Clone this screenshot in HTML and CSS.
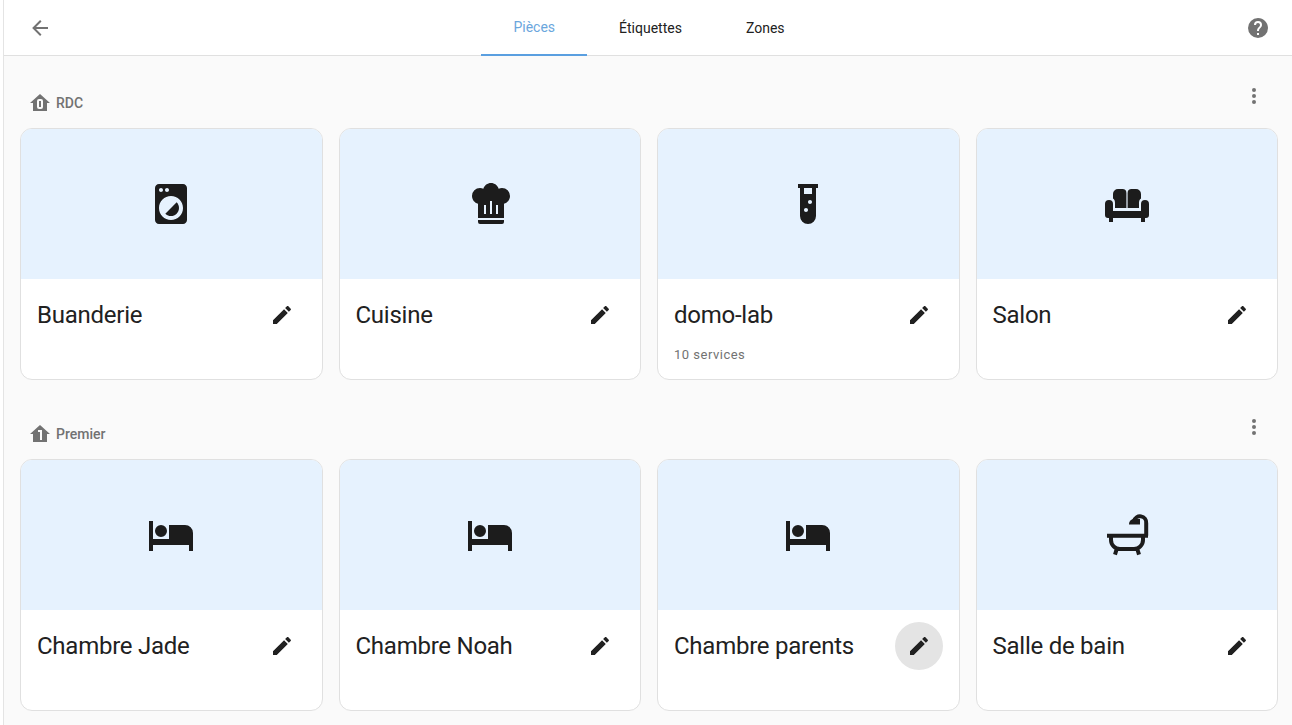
FILE: index.html
```html
<!DOCTYPE html>
<html lang="fr">
<head>
    <meta charset="UTF-8">
    <meta name="viewport" content="width=device-width, initial-scale=1.0">
    <title>Pièces</title>
    <link rel="stylesheet" href="styles.css">
</head>
<body>
    <svg class="sprites" xmlns="http://www.w3.org/2000/svg">
        <symbol id="i-pencil" viewBox="0 0 24 24"><path d="M20.71,7.04C21.1,6.65 21.1,6 20.71,5.63L18.37,3.29C18,2.9 17.35,2.9 16.96,3.29L15.12,5.12L18.87,8.87M3,17.25V21H6.75L17.81,9.93L14.06,6.18L3,17.25Z"/></symbol>
        <symbol id="i-dots" viewBox="0 0 24 24"><path d="M12,16A2,2 0 0,1 14,18A2,2 0 0,1 12,20A2,2 0 0,1 10,18A2,2 0 0,1 12,16M12,10A2,2 0 0,1 14,12A2,2 0 0,1 12,14A2,2 0 0,1 10,12A2,2 0 0,1 12,10M12,4A2,2 0 0,1 14,6A2,2 0 0,1 12,8A2,2 0 0,1 10,6A2,2 0 0,1 12,4Z"/></symbol>
        <symbol id="i-bed" viewBox="0 0 24 24"><path d="M19,7H11V14H3V5H1V20H3V17H21V20H23V11A4,4 0 0,0 19,7M7,13A3,3 0 0,0 10,10A3,3 0 0,0 7,7A3,3 0 0,0 4,10A3,3 0 0,0 7,13Z"/></symbol>
        <symbol id="i-washer" viewBox="0 0 24 24"><path fill-rule="evenodd" d="M6,2H18C19.11,2 20,2.89 20,4V20C20,21.11 19.11,22 18,22H6C4.89,22 4,21.11 4,20V4C4,2.89 4.89,2 6,2M7,4C6.45,4 6,4.45 6,5C6,5.55 6.45,6 7,6C7.55,6 8,5.55 8,5C8,4.45 7.55,4 7,4M10,4C9.45,4 9,4.45 9,5C9,5.55 9.45,6 10,6C10.55,6 11,5.55 11,5C11,4.45 10.55,4 10,4M12,8C8.69,8 6,10.69 6,14C6,17.31 8.69,20 12,20C15.31,20 18,17.31 18,14C18,10.69 15.31,8 12,8Z"/><path d="M14.83,11.17C16.39,12.73 16.39,15.27 14.83,16.83C13.27,18.39 10.73,18.39 9.17,16.83L14.83,11.17Z"/></symbol>
        <symbol id="i-chef" viewBox="0 0 24 24"><path fill-rule="evenodd" d="M12.5,1.5C10.73,1.5 9.17,2.67 8.67,4.37C8.14,4.13 7.58,4 7,4A4,4 0 0,0 3,8C3,9.82 4.24,11.42 6,11.87V19H19V11.87C20.76,11.42 22,9.82 22,8A4,4 0 0,0 18,4C17.42,4 16.86,4.13 16.33,4.37C15.83,2.67 14.27,1.5 12.5,1.5M12,10.5H13V17H12V10.5M9,12.5H10V17H9V12.5M15,12.5H16V17H15V12.5M6,20V21A1,1 0 0,0 7,22H18A1,1 0 0,0 19,21V20H6Z"/></symbol>
        <symbol id="i-tube" viewBox="0 0 24 24"><path fill-rule="evenodd" d="M7,2V4H8V18A4,4 0 0,0 12,22A4,4 0 0,0 16,18V4H17V2H7M11,16C10.4,16 10,15.6 10,15C10,14.4 10.4,14 11,14C11.6,14 12,14.4 12,15C12,15.6 11.6,16 11,16M13,12C12.4,12 12,11.6 12,11C12,10.4 12.4,10 13,10C13.6,10 14,10.4 14,11C14,11.6 13.6,12 13,12M14,7H10V4H14V7Z"/></symbol>
        <symbol id="i-sofa" viewBox="0 0 24 24"><path d="M7.5,4.5H9.7A2,2 0 0,1 11.7,6.5V14H6V11.5C6,10.4 5.7,9.7 5,9.3V7A2.5,2.5 0 0,1 7.5,4.5M14.3,4.5H16.5A2.5,2.5 0 0,1 19,7V9.3C18.3,9.7 18,10.4 18,11.5V14H12.3V6.5A2,2 0 0,1 14.3,4.5M1,12A2,2 0 0,1 5,12V15.5H19V12A2,2 0 0,1 23,12V17.5A1.5,1.5 0 0,1 21.5,19H21V21H19V19H5V21H3V19H2.5A1.5,1.5 0 0,1 1,17.5V12Z"/></symbol>
        <symbol id="i-bath" viewBox="0 0 24 24"><path d="M2,12.4H22.5M4,12.4V14.5A4.5,4.5 0 0,0 8.5,19H15.5A4.5,4.5 0 0,0 20,14.5V12.4M7,18.5L6,21.8M17,18.5L18,21.8M21.6,12.4V6A3.1,3.1 0 0,0 15.5,5" fill="none" stroke="currentColor" stroke-width="2"/><path d="M13,6.8V6.5A2.5,2.5 0 0,1 15.5,4H18.5V6.8Z"/></symbol>
        <symbol id="i-floor0" viewBox="0 0 24 24"><path fill-rule="evenodd" d="M12,3L2,12H5V20H19V12H22L12,3M11,8H13A2,2 0 0,1 15,10V16A2,2 0 0,1 13,18H11A2,2 0 0,1 9,16V10A2,2 0 0,1 11,8M11,10V16H13V10H11Z"/></symbol>
        <symbol id="i-floor1" viewBox="0 0 24 24"><path fill-rule="evenodd" d="M12,3L2,12H5V20H19V12H22L12,3M10,8H14V18H12V10H10V8Z"/></symbol>
    </svg>

    <div class="main">
        <header class="topbar">
            <button class="icon-btn">
                <svg class="icon" viewBox="0 0 24 24"><path d="M20,11V13H8L13.5,18.5L12.08,19.92L4.16,12L12.08,4.08L13.5,5.5L8,11H20Z"/></svg>
            </button>
            <nav class="tabs">
                <a class="tab active">Pièces</a>
                <a class="tab">Étiquettes</a>
                <a class="tab">Zones</a>
            </nav>
            <button class="icon-btn help">
                <svg class="icon" viewBox="0 0 24 24"><path d="M15.07,11.25L14.17,12.17C13.45,12.89 13,13.5 13,15H11V14.5C11,13.39 11.45,12.39 12.17,11.67L13.41,10.41C13.78,10.05 14,9.55 14,9C14,7.89 13.1,7 12,7A2,2 0 0,0 10,9H8A4,4 0 0,1 12,5A4,4 0 0,1 16,9C16,9.88 15.64,10.67 15.07,11.25M13,19H11V17H13M12,2A10,10 0 0,0 2,12A10,10 0 0,0 12,22A10,10 0 0,0 22,12C22,6.47 17.5,2 12,2Z"/></svg>
            </button>
        </header>

        <section class="floor">
            <div class="floor-head">
                <h2 class="floor-title">
                    <svg class="floor-icon"><use href="#i-floor0"/></svg>
                    RDC
                </h2>
                <button class="icon-btn menu"><svg class="icon"><use href="#i-dots"/></svg></button>
            </div>
            <div class="grid">
                <article class="card">
                    <div class="hero"><svg class="hero-icon"><use href="#i-washer"/></svg></div>
                    <div class="card-row"><span class="name">Buanderie</span><button class="edit"><svg class="icon"><use href="#i-pencil"/></svg></button></div>
                </article>
                <article class="card">
                    <div class="hero"><svg class="hero-icon"><use href="#i-chef"/></svg></div>
                    <div class="card-row"><span class="name">Cuisine</span><button class="edit"><svg class="icon"><use href="#i-pencil"/></svg></button></div>
                </article>
                <article class="card">
                    <div class="hero"><svg class="hero-icon"><use href="#i-tube"/></svg></div>
                    <div class="card-row"><span class="name">domo-lab</span><button class="edit"><svg class="icon"><use href="#i-pencil"/></svg></button></div>
                    <div class="sub">10 services</div>
                </article>
                <article class="card">
                    <div class="hero"><svg class="hero-icon"><use href="#i-sofa"/></svg></div>
                    <div class="card-row"><span class="name">Salon</span><button class="edit"><svg class="icon"><use href="#i-pencil"/></svg></button></div>
                </article>
            </div>
        </section>

        <section class="floor">
            <div class="floor-head">
                <h2 class="floor-title">
                    <svg class="floor-icon"><use href="#i-floor1"/></svg>
                    Premier
                </h2>
                <button class="icon-btn menu"><svg class="icon"><use href="#i-dots"/></svg></button>
            </div>
            <div class="grid">
                <article class="card">
                    <div class="hero"><svg class="hero-icon"><use href="#i-bed"/></svg></div>
                    <div class="card-row"><span class="name">Chambre Jade</span><button class="edit"><svg class="icon"><use href="#i-pencil"/></svg></button></div>
                </article>
                <article class="card">
                    <div class="hero"><svg class="hero-icon"><use href="#i-bed"/></svg></div>
                    <div class="card-row"><span class="name">Chambre Noah</span><button class="edit"><svg class="icon"><use href="#i-pencil"/></svg></button></div>
                </article>
                <article class="card">
                    <div class="hero"><svg class="hero-icon"><use href="#i-bed"/></svg></div>
                    <div class="card-row"><span class="name">Chambre parents</span><button class="edit hover"><svg class="icon"><use href="#i-pencil"/></svg></button></div>
                </article>
                <article class="card">
                    <div class="hero"><svg class="hero-icon"><use href="#i-bath"/></svg></div>
                    <div class="card-row"><span class="name">Salle de bain</span><button class="edit"><svg class="icon"><use href="#i-pencil"/></svg></button></div>
                </article>
            </div>
        </section>
    </div>
</body>
</html>
```
FILE: styles.css
```css
html, body {
    height: 725px;
    overflow: hidden;
}
body {
    margin: 0;
    padding-left: 3px;
    background-color: #fff;
    font-family: Roboto, sans-serif;
    color: #212121;
}
.sprites {
    display: none;
}
.main {
    height: 725px;
    background-color: #fafafa;
    border-left: 1px solid #e4e4e4;
}
.topbar {
    display: grid;
    grid-template-columns: 1fr auto 1fr;
    align-items: center;
    height: 55px;
    padding: 0 22px 0 24px;
    background-color: #fff;
    border-bottom: 1px solid #e0e0e0;
}
.icon-btn {
    display: flex;
    padding: 0;
    border: none;
    background: none;
    color: #727272;
}
.help {
    justify-self: end;
}
.icon {
    display: block;
    width: 24px;
    height: 24px;
    fill: currentColor;
}
.tabs {
    display: flex;
    height: 56px;
    align-self: start;
}
.tab {
    display: flex;
    align-items: center;
    padding: 1px 32px 0;
    font-size: 14px;
    border-bottom: 2px solid transparent;
    box-sizing: border-box;
}
.tab.active {
    padding-top: 0;
    color: #6ba6dd;
    border-bottom-color: #5a9fe0;
}
.floor {
    padding: 16px 14px 0 16px;
}
.floor + .floor {
    padding-top: 23px;
}
.floor-head {
    display: flex;
    justify-content: space-between;
    height: 48px;
    margin-bottom: 8px;
}
.floor-title {
    display: flex;
    align-items: center;
    gap: 4px;
    margin: 11px 0 0 8px;
    height: 40px;
    font-size: 14px;
    font-weight: 500;
    color: #727272;
}
.floor-icon {
    width: 24px;
    height: 24px;
    fill: currentColor;
}
.menu {
    align-self: center;
    margin-right: 12px;
}
.grid {
    display: grid;
    grid-template-columns: repeat(4, 1fr);
    gap: 16px;
}
.card {
    position: relative;
    height: 252px;
    box-sizing: border-box;
    background-color: #fff;
    border: 1px solid #e0e0e0;
    border-radius: 12px;
    overflow: hidden;
}
.hero {
    display: flex;
    align-items: center;
    justify-content: center;
    height: 150px;
    background-color: #e6f2fe;
}
.hero-icon {
    width: 48px;
    height: 48px;
    fill: #1c1c1c;
    color: #1c1c1c;
}
.card-row {
    display: flex;
    align-items: center;
    justify-content: space-between;
    padding: 12px 16px;
}
.name {
    font-size: 24px;
    line-height: 32px;
    letter-spacing: -0.25px;
}
.edit {
    display: flex;
    align-items: center;
    justify-content: center;
    width: 48px;
    height: 48px;
    padding: 0;
    border: none;
    border-radius: 50%;
    background: none;
    color: #212121;
}
.edit.hover {
    background-color: #e4e4e4;
}
.sub {
    margin-top: -4px;
    padding: 0 16px;
    font-size: 13px;
    letter-spacing: 0.5px;
    color: #727272;
}
```
